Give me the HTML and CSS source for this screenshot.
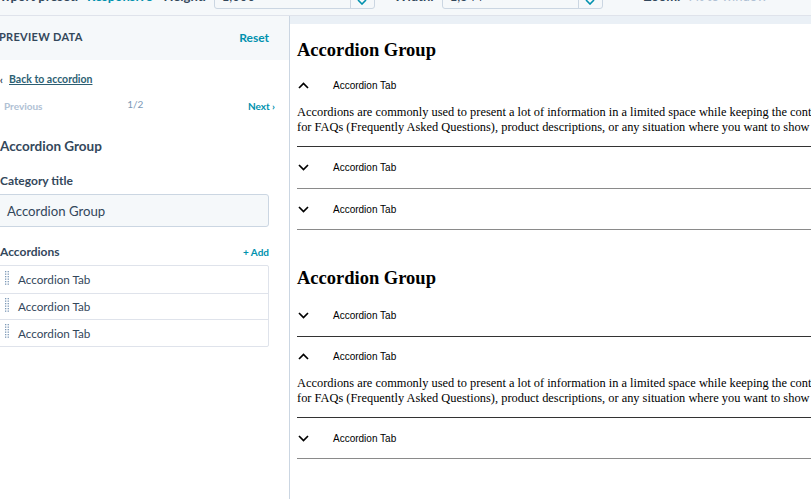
FILE: index.html
```html
<!DOCTYPE html>
<html>
<head>
<meta charset="utf-8">
<link rel="stylesheet" href="styles.css">
</head>
<body>
<div class="toolbar">
  <div class="toolbar-row">
    <span class="lbl">Viewport preset:</span>
    <span class="link">Responsive</span>
    <span class="lbl lbl-gap">Height:</span>
    <div class="select">
      <span class="sval">1,000</span>
      <span class="sbtn"><svg width="10" height="6" viewBox="0 0 10 6"><polyline points="1,1 5,5 9,1" fill="none" stroke="#0091ae" stroke-width="1.6"/></svg></span>
    </div>
    <svg class="swap" width="6" height="12" viewBox="0 0 6 12"><path d="M3 0 L3 12" stroke="#0091ae" stroke-width="1.5"/></svg>
    <span class="lbl">Width:</span>
    <div class="select">
      <span class="sval">1,344</span>
      <span class="sbtn"><svg width="10" height="6" viewBox="0 0 10 6"><polyline points="1,1 5,5 9,1" fill="none" stroke="#0091ae" stroke-width="1.6"/></svg></span>
    </div>
    <span class="lbl lbl-gap2">Zoom:</span>
    <span class="muted">Fit to window</span>
    <svg class="zicon" width="8" height="8" viewBox="0 0 8 8"><circle cx="4" cy="0" r="3" fill="none" stroke="#b0c1d4" stroke-width="1.5"/></svg>
  </div>
</div>
<div class="main">
  <aside class="panel">
    <div class="panel-head">
      <span class="ph-title">PREVIEW DATA</span>
      <span class="ph-reset">Reset</span>
    </div>
    <div class="panel-body">
      <div class="back"><span class="back-chev">‹</span><span class="back-link">Back to accordion</span></div>
      <div class="pager">
        <span class="prev">Previous</span>
        <span class="count">1/2</span>
        <span class="next">Next ›</span>
      </div>
      <div class="sec-title">Accordion Group</div>
      <div class="field-label">Category title</div>
      <div class="input">Accordion Group</div>
      <div class="list-head">
        <span class="field-label nomargin">Accordions</span>
        <span class="add">+ Add</span>
      </div>
      <div class="list">
        <div class="item"><svg class="grip" width="4" height="14" viewBox="0 0 4 14"><g fill="#7c98b6"><rect x="0" y="0" width="1.3" height="1.3"/><rect x="2.6" y="0" width="1.3" height="1.3"/><rect x="0" y="2.5" width="1.3" height="1.3"/><rect x="2.6" y="2.5" width="1.3" height="1.3"/><rect x="0" y="5" width="1.3" height="1.3"/><rect x="2.6" y="5" width="1.3" height="1.3"/><rect x="0" y="7.5" width="1.3" height="1.3"/><rect x="2.6" y="7.5" width="1.3" height="1.3"/><rect x="0" y="10" width="1.3" height="1.3"/><rect x="2.6" y="10" width="1.3" height="1.3"/><rect x="0" y="12.5" width="1.3" height="1.3"/><rect x="2.6" y="12.5" width="1.3" height="1.3"/></g></svg><span>Accordion Tab</span></div>
        <div class="item"><svg class="grip" width="4" height="14" viewBox="0 0 4 14"><g fill="#7c98b6"><rect x="0" y="0" width="1.3" height="1.3"/><rect x="2.6" y="0" width="1.3" height="1.3"/><rect x="0" y="2.5" width="1.3" height="1.3"/><rect x="2.6" y="2.5" width="1.3" height="1.3"/><rect x="0" y="5" width="1.3" height="1.3"/><rect x="2.6" y="5" width="1.3" height="1.3"/><rect x="0" y="7.5" width="1.3" height="1.3"/><rect x="2.6" y="7.5" width="1.3" height="1.3"/><rect x="0" y="10" width="1.3" height="1.3"/><rect x="2.6" y="10" width="1.3" height="1.3"/><rect x="0" y="12.5" width="1.3" height="1.3"/><rect x="2.6" y="12.5" width="1.3" height="1.3"/></g></svg><span>Accordion Tab</span></div>
        <div class="item"><svg class="grip" width="4" height="14" viewBox="0 0 4 14"><g fill="#7c98b6"><rect x="0" y="0" width="1.3" height="1.3"/><rect x="2.6" y="0" width="1.3" height="1.3"/><rect x="0" y="2.5" width="1.3" height="1.3"/><rect x="2.6" y="2.5" width="1.3" height="1.3"/><rect x="0" y="5" width="1.3" height="1.3"/><rect x="2.6" y="5" width="1.3" height="1.3"/><rect x="0" y="7.5" width="1.3" height="1.3"/><rect x="2.6" y="7.5" width="1.3" height="1.3"/><rect x="0" y="10" width="1.3" height="1.3"/><rect x="2.6" y="10" width="1.3" height="1.3"/><rect x="0" y="12.5" width="1.3" height="1.3"/><rect x="2.6" y="12.5" width="1.3" height="1.3"/></g></svg><span>Accordion Tab</span></div>
      </div>
    </div>
  </aside>
  <section class="preview">
    <div class="preview-band"></div>
    <div class="preview-page">
      <div class="group">
        <h2 class="g-title">Accordion Group</h2>
        <div class="tab tab-open"><svg class="chev" width="11" height="7" viewBox="0 0 11 7"><polyline points="1,6 5.5,1.5 10,6" fill="none" stroke="#000" stroke-width="1.7"/></svg><span>Accordion Tab</span></div>
        <p class="body">Accordions are commonly used to present a lot of information in a limited space while keeping the content organized and easy to scan. They are ideal<br>for FAQs (Frequently Asked Questions), product descriptions, or any situation where you want to show details on demand.</p>
        <div class="rule dark"></div>
        <div class="tab"><svg class="chev" width="11" height="7" viewBox="0 0 11 7"><polyline points="1,1 5.5,5.5 10,1" fill="none" stroke="#000" stroke-width="1.7"/></svg><span>Accordion Tab</span></div>
        <div class="rule"></div>
        <div class="tab tab-short"><svg class="chev" width="11" height="7" viewBox="0 0 11 7"><polyline points="1,1 5.5,5.5 10,1" fill="none" stroke="#000" stroke-width="1.7"/></svg><span>Accordion Tab</span></div>
        <div class="rule"></div>
      </div>
      <div class="group group2">
        <h2 class="g-title">Accordion Group</h2>
        <div class="tab"><svg class="chev" width="11" height="7" viewBox="0 0 11 7"><polyline points="1,1 5.5,5.5 10,1" fill="none" stroke="#000" stroke-width="1.7"/></svg><span>Accordion Tab</span></div>
        <div class="rule dark"></div>
        <div class="tab tab-open"><svg class="chev" width="11" height="7" viewBox="0 0 11 7"><polyline points="1,6 5.5,1.5 10,6" fill="none" stroke="#000" stroke-width="1.7"/></svg><span>Accordion Tab</span></div>
        <p class="body">Accordions are commonly used to present a lot of information in a limited space while keeping the content organized and easy to scan. They are ideal<br>for FAQs (Frequently Asked Questions), product descriptions, or any situation where you want to show details on demand.</p>
        <div class="rule dark"></div>
        <div class="tab tab-short"><svg class="chev" width="11" height="7" viewBox="0 0 11 7"><polyline points="1,1 5.5,5.5 10,1" fill="none" stroke="#000" stroke-width="1.7"/></svg><span>Accordion Tab</span></div>
        <div class="rule"></div>
      </div>
    </div>
  </section>
</div>
</body>
</html>
```

FILE: styles.css
```css
* { box-sizing: border-box; }
html, body { margin: 0; padding: 0; }
body {
  width: 811px;
  height: 499px;
  overflow: hidden;
  font-family: "Lato", "Open Sans", sans-serif;
  color: #33475b;
  background: #fff;
}

.toolbar {
  height: 16px;
  overflow: hidden;
  background: #f5f8fa;
  border-bottom: 1px solid #dfe3eb;
}
.toolbar-row {
  display: flex;
  align-items: center;
  height: 30px;
  margin-top: -21px;
  margin-left: -19px;
  font-size: 13px;
  white-space: nowrap;
}
.toolbar-row > span { margin-top: 3px; }
.lbl { font-weight: 700; color: #33475b; }
.lbl-gap { margin-left: 11px; }
.lbl-gap2 { margin-left: 41px; }
.link { color: #0091ae; font-weight: 700; margin-left: 9px; }
.muted { color: #b0c1d4; margin-left: 8px; }
.zicon { margin-left: 12px; }
.select {
  display: flex;
  width: 161px;
  height: 30px;
  margin-left: 8px;
  background: #f5f8fa;
  border: 1px solid #cbd6e2;
  border-radius: 3px;
  overflow: hidden;
}
.sval { flex: 1; padding: 8px 7px 0; color: #33475b; font-size: 13px; }
.sbtn {
  width: 24px;
  border-left: 1px solid #cbd6e2;
  display: flex;
  align-items: flex-end;
  justify-content: center;
  padding-bottom: 3px;
}
.swap { margin-left: 8px; margin-right: 5px; }

.main {
  display: flex;
  height: 483px;
}

.panel {
  width: 314px;
  margin-left: -24px;
  flex: none;
  border-right: 1px solid #cbd6e2;
  background: #fff;
}
.panel-head {
  height: 44px;
  background: #f5f8fa;
  display: flex;
  align-items: center;
  justify-content: space-between;
  padding: 0 20px 0 23px;
}
.ph-title {
  font-size: 11px;
  font-weight: 700;
  letter-spacing: 0.3px;
  color: #33475b;
  margin-top: -4px;
}
.ph-reset {
  font-size: 12px;
  font-weight: 700;
  color: #0091ae;
  margin-top: -1px;
}
.panel-body { padding: 11px 20px 0 24px; }
.back {
  display: flex;
  align-items: center;
  font-size: 10.5px;
  font-weight: 700;
  height: 16px;
}
.back-chev { margin-left: -24px; width: 33px; text-align: right; padding-right: 6px; color: #33475b; font-size: 11px; }
.back-link { text-decoration: underline; color: #2d5f73; }
.pager {
  display: flex;
  align-items: center;
  justify-content: space-between;
  margin-top: 11px;
  height: 16px;
  font-size: 10px;
  font-weight: 700;
  margin-right: -6px;
}
.prev { color: #b0c1d4; margin-left: 4px; }
.count { color: #7c98b6; font-weight: 400; margin-top: -4px; margin-left: -20px; }
.next { color: #0091ae; }
.sec-title {
  margin-top: 22px;
  font-size: 13.5px;
  font-weight: 700;
  height: 20px;
  line-height: 20px;
}
.field-label {
  display: block;
  margin-top: 17px;
  font-size: 12px;
  font-weight: 700;
  line-height: 16px;
}
.field-label.nomargin { margin-top: 0; }
.input {
  margin-top: 5px;
  margin-left: -4px;
  height: 33px;
  background: #f5f8fa;
  border: 1px solid #cbd6e2;
  border-radius: 3px;
  padding: 0 10px;
  display: flex;
  align-items: center;
  font-size: 13.2px;
  color: #33475b;
}
.list-head {
  display: flex;
  justify-content: space-between;
  align-items: center;
  margin-top: 17px;
  height: 16px;
}
.add { font-size: 10px; font-weight: 700; color: #0091ae; }
.list {
  margin-top: 5px;
  margin-left: -2px;
  border: 1px solid #dfe3eb;
  border-radius: 2px;
}
.item {
  height: 26.5px;
  display: flex;
  align-items: center;
  padding-left: 6px;
  font-size: 11.7px;
  color: #33475b;
  border-top: 1px solid #dfe3eb;
}
.item:first-child { border-top: none; }
.grip { margin-right: 9px; margin-top: -3px; }

.preview {
  flex: 1;
  min-width: 0;
  overflow: hidden;
  background: #fff;
}
.preview-band {
  height: 8px;
  background: #eaf0f6;
}
.preview-page {
  padding-left: 7px;
  width: 1000px;
  font-family: "Liberation Serif", "Times New Roman", serif;
  color: #000;
}
.g-title {
  margin: 15px 0 5px;
  font-size: 18.5px;
  line-height: 22px;
  font-weight: 700;
}
.group2 .g-title { margin: 37px 0 6px; }
.tab {
  height: 41px;
  display: flex;
  align-items: center;
  font-family: "Liberation Sans", Arial, sans-serif;
  font-size: 10px;
}
.tab-open { height: 39px; }
.tab-short { height: 40px; }
.chev { margin-left: 1px; margin-right: 24px; }
.body {
  margin: 0 0 11px;
  font-size: 12.4px;
  line-height: 15px;
  white-space: nowrap;
}
.rule { height: 1px; background: #8a8a8a; }
.rule.dark { background: #333; }
```
